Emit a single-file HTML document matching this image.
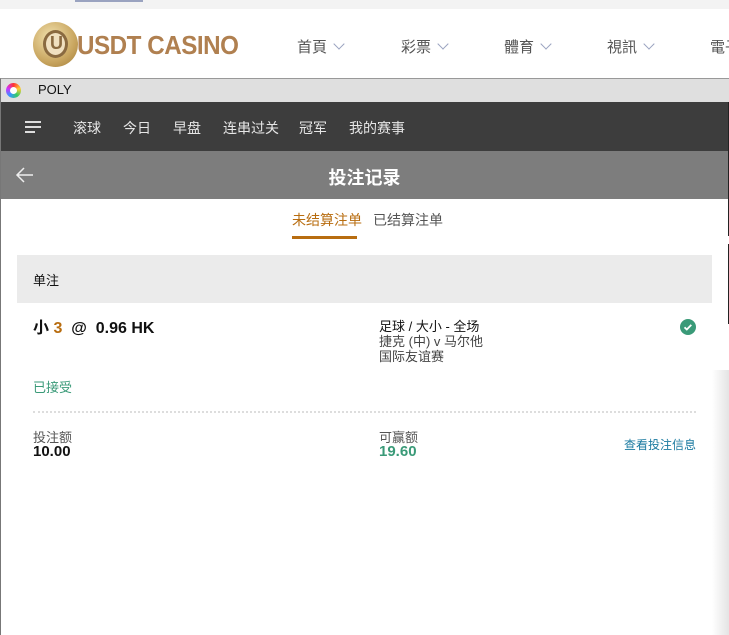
<!DOCTYPE html>
<html><head><meta charset="utf-8"><style>
*{margin:0;padding:0;box-sizing:border-box}
body{width:729px;height:635px;overflow:hidden;background:#fff;font-family:"Liberation Sans","Noto Sans CJK SC",sans-serif;position:relative}
.a{position:absolute;white-space:nowrap}
.menu span{position:absolute;top:36px;font-size:15px;color:#555;white-space:nowrap}
.menu i{display:inline-block;width:8px;height:8px;border-right:1.5px solid #9aa3c0;border-bottom:1.5px solid #9aa3c0;transform:rotate(45deg);margin-left:8px;position:relative;top:-4px}
.nav span{position:absolute;top:118px;font-size:14px;color:#e6e6e6}
</style></head><body>
<div class="a" style="left:0;top:0;width:729px;height:9px;background:#f3f3f3"></div>
<div class="a" style="left:75px;top:0;width:68px;height:2px;background:#9aa3c0"></div>
<div class="a" style="left:33px;top:22px;width:45px;height:45px;border-radius:50%;background:radial-gradient(circle at 40% 35%,#f3e3b0,#c9a660 60%,#a07a35)"></div>
<div class="a" style="left:43px;top:30px;width:25px;height:28px;border-radius:50%;border:3px solid #8a6a40;background:#f0e0c0"></div>
<div class="a" style="left:50px;top:33px;font-size:18px;font-weight:bold;color:#8a6a40">U</div>
<div class="a" style="left:77px;top:30px;font-size:26px;font-weight:bold;color:#b08050;letter-spacing:-0.5px;transform:scaleX(0.93);transform-origin:left">USDT CASINO</div>
<div class="menu">
<span style="left:297px">首頁<i></i></span>
<span style="left:401px">彩票<i></i></span>
<span style="left:504px">體育<i></i></span>
<span style="left:607px">視訊<i></i></span>
<span style="left:710px">電子</span>
</div>
<div class="a" style="left:0;top:78px;width:729px;height:557px;border-left:1px solid #777;border-top:1px solid #999"></div>
<div class="a" style="left:1px;top:79px;width:728px;height:23px;background:#dfdfdf"></div>
<div class="a" style="left:6px;top:83px;width:15px;height:15px;border-radius:50%;background:conic-gradient(#f33,#fc3,#3c6,#39f,#c3f,#f33)"></div>
<div class="a" style="left:10px;top:87px;width:7px;height:7px;border-radius:50%;background:#fff"></div>
<div class="a" style="left:38px;top:82px;font-size:13px;color:#111">POLY</div>
<div class="a" style="left:1px;top:102px;width:727px;height:49px;background:#3d3d3d"></div>
<div class="a" style="left:25px;top:121px;width:16px;height:2px;background:#ddd"></div>
<div class="a" style="left:25px;top:126px;width:16px;height:2px;background:#ddd"></div>
<div class="a" style="left:25px;top:131px;width:10px;height:2px;background:#ddd"></div>
<div class="nav">
<span style="left:73px">滚球</span><span style="left:123px">今日</span><span style="left:173px">早盘</span><span style="left:223px">连串过关</span><span style="left:299px">冠军</span><span style="left:349px">我的赛事</span>
</div>
<div class="a" style="left:1px;top:151px;width:727px;height:48px;background:#7d7d7d"></div>
<svg class="a" style="left:15px;top:166px" width="20" height="18"><path d="M18 9H2M9 2L2 9l7 7" fill="none" stroke="#eee" stroke-width="1.5"/></svg>
<div class="a" style="left:0;width:729px;top:164px;text-align:center;font-size:18px;font-weight:bold;color:#fff">投注记录</div>
<div class="a" style="left:292px;top:210px;font-size:14px;color:#b86d10">未结算注单</div>
<div class="a" style="left:292px;top:236px;width:65px;height:3px;background:#b86d10"></div>
<div class="a" style="left:373px;top:210px;font-size:14px;color:#555">已结算注单</div>
<div class="a" style="left:17px;top:255px;width:695px;height:48px;background:#ebebeb"></div>
<div class="a" style="left:33px;top:270px;font-size:13px;color:#111">单注</div>
<div class="a" style="left:33px;top:314px;font-size:16px;font-weight:bold;color:#111">小 <span style="color:#b86d10">3</span> &nbsp;@ &nbsp;0.96 HK</div>
<div class="a" style="left:379px;top:319px;font-size:13px;color:#111;line-height:15px">足球 / 大小 - 全场<br><span style="color:#444">捷克 (中) v 马尔他<br>国际友谊赛</span></div>
<div class="a" style="left:680px;top:319px;width:16px;height:16px;border-radius:50%;background:#3a9a78"></div>
<svg class="a" style="left:680px;top:319px" width="16" height="16"><path d="M4.5 8.3l2.3 2.2 4.5-4.6" fill="none" stroke="#fff" stroke-width="1.8"/></svg>
<div class="a" style="left:33px;top:377px;font-size:13px;color:#3a9a78">已接受</div>
<div class="a" style="left:33px;top:411px;width:663px;border-top:2px dotted #ddd"></div>
<div class="a" style="left:33px;top:427px;font-size:13px;color:#555">投注额</div>
<div class="a" style="left:33px;top:443px;font-size:15px;font-weight:bold;color:#111">10.00</div>
<div class="a" style="left:379px;top:427px;font-size:13px;color:#555">可赢额</div>
<div class="a" style="left:379px;top:443px;font-size:15px;font-weight:bold;color:#3a9a78">19.60</div>
<div class="a" style="left:624px;top:436px;font-size:12px;color:#1a7aa0">查看投注信息</div>
<div class="a" style="left:728px;top:102px;width:1px;height:134px;background:#222"></div>
<div class="a" style="left:728px;top:244px;width:1px;height:80px;background:#222"></div>
<div class="a" style="left:712px;top:370px;width:17px;height:265px;background:linear-gradient(to right,#fff,#e4e4e4)"></div>
</body></html>
